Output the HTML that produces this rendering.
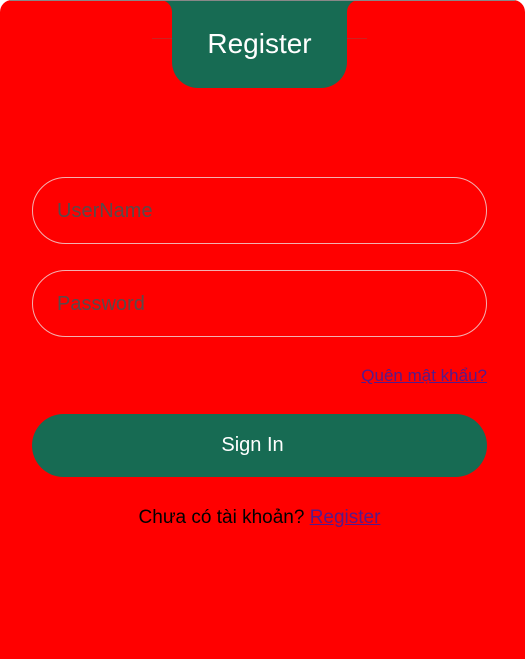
<!DOCTYPE html>
<html><head><style>
html,body{margin:0;padding:0;width:525px;height:659px;overflow:hidden;background:#fff;font-family:"Liberation Sans",Arial,sans-serif;}
.card{position:absolute;left:0;top:0;width:525px;height:659px;background:#f00;border-radius:12px 12px 0 0;}
.topline{position:absolute;left:10px;top:0;width:505px;height:1px;background:#888;z-index:5;}
.gs{position:absolute;left:160px;top:0;width:200px;height:14px;background:#176b53;}
.tab{position:absolute;left:172px;top:0;width:175px;height:88px;background:#176b53;border-radius:0 0 26px 26px;color:#fff;font-size:28px;text-align:center;line-height:88px;}
.cl{position:absolute;top:0;width:20px;height:20px;background:#f00;}
.hl{position:absolute;top:38px;height:1px;background:#c22;}
.inp{position:absolute;left:32px;width:455px;height:67px;border:1px solid #f3b0b0;border-radius:34px;box-sizing:border-box;color:#5a4a4a;font-size:20px;line-height:67px;padding-left:24px;}
a{color:#551a8b;text-decoration:underline;}
.btn{position:absolute;left:32px;top:414px;width:455px;height:63px;background:#176b53;border-radius:32px;color:#fff;font-size:20px;text-align:center;line-height:63px;box-sizing:border-box;padding-right:14px;}
</style></head><body>
<div class="card"></div>
<div class="topline"></div>
<div class="gs"></div>
<div class="hl" style="left:152px;width:20px"></div>
<div class="hl" style="left:347px;width:20px"></div>
<div class="tab">Register</div>
<div class="cl" style="left:152px;border-radius:0 12px 0 0"></div>
<div class="cl" style="left:347px;border-radius:12px 0 0 0"></div>
<div class="inp" style="top:177px">UserName</div>
<div class="inp" style="top:270px">Password</div>
<div style="position:absolute;right:38px;top:366px;font-size:17px"><a>Quên mật khẩu?</a></div>
<div class="btn">Sign In</div>
<div style="position:absolute;left:0;width:519px;top:507px;text-align:center;font-size:19px;color:#000">Chưa có tài khoản? <a>Register</a></div>
</body></html>
